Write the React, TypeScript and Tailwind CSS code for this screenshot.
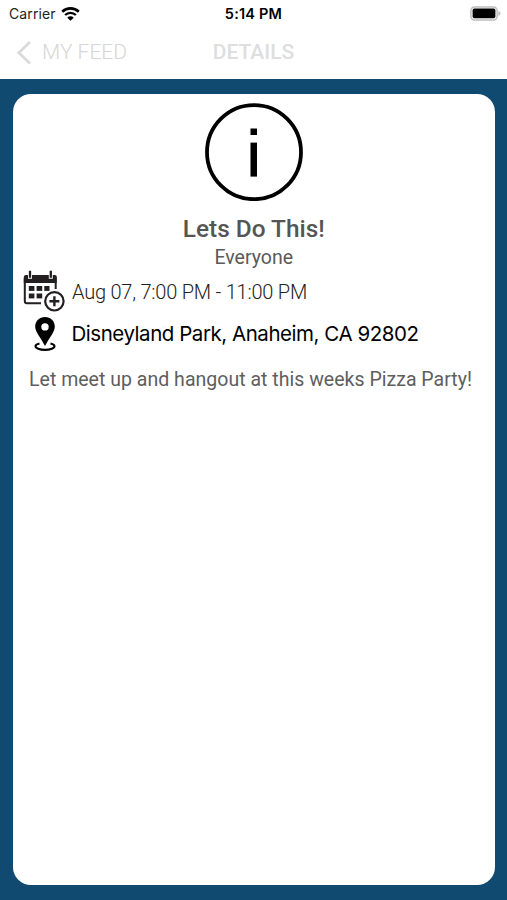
function WifiIcon() {
  return (
    <svg className="ml-[5px] h-[15px] w-[19px]" viewBox="0 0 19 15" fill="none" stroke="#000">
      <path d="M1.2 4.7a12 12 0 0 1 16.6 0" strokeWidth="2.6" />
      <path d="M4.1 8a7.8 7.8 0 0 1 10.8 0" strokeWidth="2.4" />
      <path d="M9.5 13.8 6.3 10.8a4.2 4.2 0 0 1 6.4 0Z" fill="#000" stroke="none" />
    </svg>
  )
}

function BatteryIcon() {
  return (
    <svg className="-mt-0.5 h-[15px] w-[32px]" viewBox="0 0 32 15">
      <rect x="0.9" y="0.9" width="26.2" height="13" rx="3.6" fill="#fff" stroke="#bdbdbd" strokeWidth="1.5" />
      <rect x="2.6" y="2.6" width="22.8" height="9.6" rx="1.6" fill="#000" />
      <path d="M28.4 5v5c1.4-.5 2.1-1.4 2.1-2.5S29.8 5.5 28.4 5Z" fill="#bdbdbd" />
    </svg>
  )
}

function InfoIcon() {
  return (
    <svg className="h-[98px] w-[98px]" viewBox="0 0 98 98">
      <circle cx="49" cy="49.2" r="47" fill="none" stroke="#000" strokeWidth="3.8" />
      <rect x="45.5" y="25.5" width="6.5" height="6.5" />
      <rect x="45.5" y="39.6" width="6.5" height="34" />
    </svg>
  )
}

function CalendarIcon() {
  return (
    <svg className="-mt-0.5 h-[42px] w-[42px]" viewBox="0 0 42 42" fill="none" stroke="#231f20">
      <path d="M18 33.3H4a2.2 2.2 0 0 1-2.2-2.2V8M32.7 13v6" strokeWidth="2" />
      <path d="M.8 13V7.2A2.2 2.2 0 0 1 3 5h2v3.8h4V5h16.8v3.8h4V5h1.9a2.2 2.2 0 0 1 2.2 2.2V13Z" fill="#231f20" stroke="none" />
      <path d="M7 .8v7M27.8 .8v7" strokeWidth="2.3" />
      <g fill="#231f20" stroke="none">
        <rect x="5.8" y="16" width="5.6" height="4.9" />
        <rect x="13.6" y="16" width="5.6" height="4.9" />
        <rect x="21.3" y="16" width="5.2" height="4.9" />
        <rect x="5.8" y="23.5" width="5.6" height="4.9" />
        <rect x="13.6" y="23.5" width="5.6" height="4.9" />
      </g>
      <circle cx="31.4" cy="31.3" r="9.2" strokeWidth="2.2" />
      <path d="M31.4 26.3v10M26.4 31.3h10" strokeWidth="2.4" />
    </svg>
  )
}

function PinIcon() {
  return (
    <svg className="h-9 w-[22px]" viewBox="0 0 22 36">
      <path
        d="M11 1C5.5 1 1.2 5.1 1.2 10.4c0 3 1.5 5.7 3 8.3C6.6 22.6 9 26 11 30c2-4 4.4-7.4 6.8-11.3 1.5-2.6 3-5.3 3-8.3C20.8 5.1 16.5 1 11 1Zm0 6.2a3.7 3.7 0 1 1 0 7.4 3.7 3.7 0 0 1 0-7.4Z"
        fillRule="evenodd"
      />
      <path d="M5.5 27.4C2.8 28 1.5 29 1.5 30.2c0 2 4.2 3.7 9.5 3.7s9.5-1.7 9.5-3.7c0-1.2-1.3-2.2-4-2.8" fill="none" stroke="#000" strokeWidth="2.1" />
    </svg>
  )
}

export default function App() {
  return (
    <div className="flex h-[900px] w-full flex-col bg-[#104a70] font-[Roboto,sans-serif]">
      <header className="h-[79px] bg-white">
        {/* Status bar */}
        <div className="grid h-7 grid-cols-[1fr_auto_1fr] items-center pr-[5px] pl-[9px] font-[Inter,sans-serif] text-[14px] text-black">
          <div className="flex items-center">
            <span className="-mt-0.5 tracking-[0.1px] text-[#222]">Carrier</span>
            <WifiIcon />
          </div>
          <span className="-ml-1 text-center text-[14.5px] font-semibold tracking-[0.2px] whitespace-nowrap">5:14 PM</span>
          <div className="flex justify-end">
            <BatteryIcon />
          </div>
        </div>

        {/* Navigation bar */}
        <nav className="grid h-[49px] grid-cols-3 items-center text-[21px] text-[#dedede]">
          <div className="flex items-center pl-4">
            <svg className="h-6 w-4" viewBox="0 0 16 24" fill="none" stroke="#dadada" strokeWidth="2.8">
              <path d="M14 1 2.8 11.7l11.200 10.800" />
            </svg>
            <span className="ml-2.5 pt-px font-light whitespace-nowrap text-[#d6d6d6]">MY FEED</span>
          </div>
          <h1 className="pt-px text-center font-medium">DETAILS</h1>
        </nav>
      </header>

      <main className="flex-1 pt-[15px] pr-[12.5px] pb-[15px] pl-[13px]">
        <article className="flex h-full flex-col rounded-[18px] bg-white">
          <div className="flex flex-col items-center pt-[9px]">
            <InfoIcon />
            <h2 className="mt-[13px] text-[24.4px] leading-[30px] font-medium text-[#555]">Lets Do This!</h2>
            <p className="text-[19.5px] leading-[27px] text-[#5a5a5a]">Everyone</p>
          </div>

          <div className="flex h-[42px] items-center pl-[10px]">
            <CalendarIcon />
            <span className="ml-[7px] text-[20px] font-light tracking-[-0.22px] whitespace-nowrap text-[#222]">
              Aug 07, 7:00 PM - 11:00 PM
            </span>
          </div>

          <div className="flex h-[42px] items-center pl-[20.5px]">
            <PinIcon />
            <span className="ml-4 pt-px font-[Inter,sans-serif] text-[20.5px] tracking-[-0.46px] whitespace-nowrap text-black">
              Disneyland Park, Anaheim, CA 92802
            </span>
          </div>

          <p className="mt-[9px] pl-4 text-[19.5px] leading-[31px] tracking-[0.02px] whitespace-nowrap text-[#5e5e5e]">
            Let meet up and hangout at this weeks Pizza Party!
          </p>
        </article>
      </main>
    </div>
  )
}
